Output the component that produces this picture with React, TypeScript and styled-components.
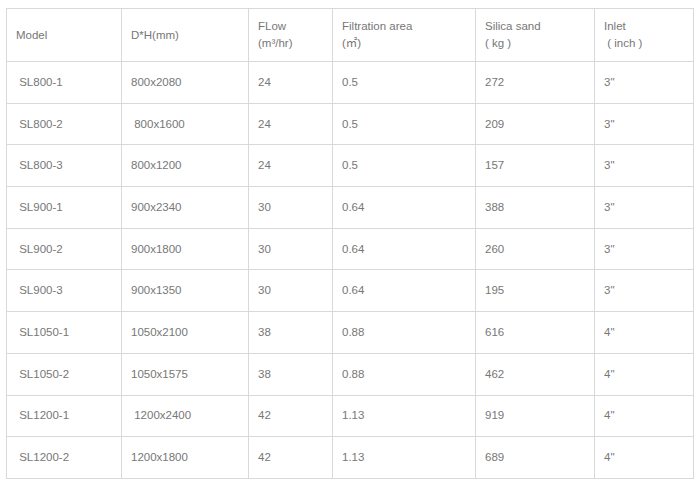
import React from 'react'
import styled, {createGlobalStyle} from 'styled-components'

const GlobalStyle = createGlobalStyle`
	body {
		margin: 0;
		background: #fff;
		font-family: "Liberation Sans", Arial, "Noto Sans CJK SC", sans-serif;
	}
`

const columns = [115, 127, 84, 143, 119, 99]

const headers: string[][] = [
	['Model'],
	['D*H(mm)'],
	['FLow', '(m³/hr)'],
	['Filtration area', '(㎡)'],
	['Silica sand', '( kg )'],
	['Inlet', '\u00a0( inch )']
]

const rows: string[][] = [
	['\u00a0SL800-1', '800x2080', '24', '0.5', '272', '3"'],
	['\u00a0SL800-2', '\u00a0800x1600', '24', '0.5', '209', '3"'],
	['\u00a0SL800-3', '800x1200', '24', '0.5', '157', '3"'],
	['\u00a0SL900-1', '900x2340', '30', '0.64', '388', '3"'],
	['\u00a0SL900-2', '900x1800', '30', '0.64', '260', '3"'],
	['\u00a0SL900-3', '900x1350', '30', '0.64', '195', '3"'],
	['\u00a0SL1050-1', '1050x2100', '38', '0.88', '616', '4"'],
	['\u00a0SL1050-2', '1050x1575', '38', '0.88', '462', '4"'],
	['\u00a0SL1200-1', '\u00a01200x2400', '42', '1.13', '919', '4"'],
	['\u00a0SL1200-2', '1200x1800', '42', '1.13', '689', '4"']
]

const Page = styled.div`
	padding: 8px 0 0 6px;
`

const Table = styled.table`
	border-collapse: collapse;
	table-layout: fixed;
	width: 688px;
	border: 1px solid #d9d9d9;
	color: #777;
	font-size: 11.5px;
`

const HeadRow = styled.tr`
	height: 53px;
`

const Row = styled.tr`
	height: 41.7px;
`

const Cell = styled.td`
	border: 1px solid #d9d9d9;
	padding: 0 9px;
	vertical-align: middle;
	text-align: left;
	line-height: 17px;
	white-space: nowrap;
	font-weight: normal;
`

const HeadCell = styled(Cell).attrs({as: 'th'})``

const Line = styled.div`
	display: block;
`

const App = () => {
	return (
		<Page>
			<GlobalStyle />
			<Table>
				<colgroup>
					{columns.map((w, i) => (
						<col key={i} style={{width: w}} />
					))}
				</colgroup>
				<thead>
					<HeadRow>
						{headers.map((h, i) => (
							<HeadCell key={i}>
								{h.map((t, j) => (
									<Line key={j}>{t}</Line>
								))}
							</HeadCell>
						))}
					</HeadRow>
				</thead>
				<tbody>
					{rows.map((r, i) => (
						<Row key={i}>
							{r.map((c, j) => (
								<Cell key={j}>{c}</Cell>
							))}
						</Row>
					))}
				</tbody>
			</Table>
		</Page>
	)
}

export default App
